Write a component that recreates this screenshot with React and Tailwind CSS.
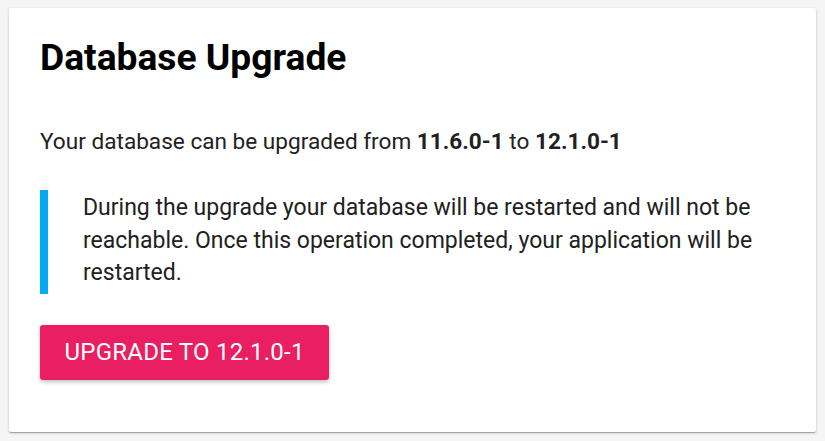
export default function App() {
  return (
    <div className="min-h-screen bg-[#f5f5f5] px-[9px] pt-[8px] pb-[9px] font-['Roboto',sans-serif] text-[#212121]">
      <div className="bg-white rounded-[2px] shadow-[0_1px_3px_rgba(0,0,0,0.2),0_1px_1px_rgba(0,0,0,0.14),0_2px_1px_-1px_rgba(0,0,0,0.12)] px-[31px] pt-[27px] pb-[52px]">
        <h1 className="text-[37.2px] font-bold leading-[44px] text-black">Database Upgrade</h1>
        <p className="mt-[49px] text-[22.6px] leading-[28px]">
          Your database can be upgraded from <b className="font-bold">11.6.0-1</b> to{" "}
          <b className="font-bold">12.1.0-1</b>
        </p>
        <div className="mt-[34px] border-l-[8px] border-[#03a9f4] pl-[35px] pr-[30px] pt-[2px] pb-[4px]">
          <p className="text-[23px] leading-[32.5px]">
            During the upgrade your database will be restarted and will not be reachable. Once this
            operation completed, your application will be restarted.
          </p>
        </div>
        <button className="mt-[31px] h-[55px] px-[24.5px] bg-[#e91e63] text-white text-[24px] rounded-[3px] shadow-[0_2px_4px_rgba(0,0,0,0.25)] tracking-[0.01em]">
          UPGRADE TO 12.1.0-1
        </button>
      </div>
    </div>
  );
}
